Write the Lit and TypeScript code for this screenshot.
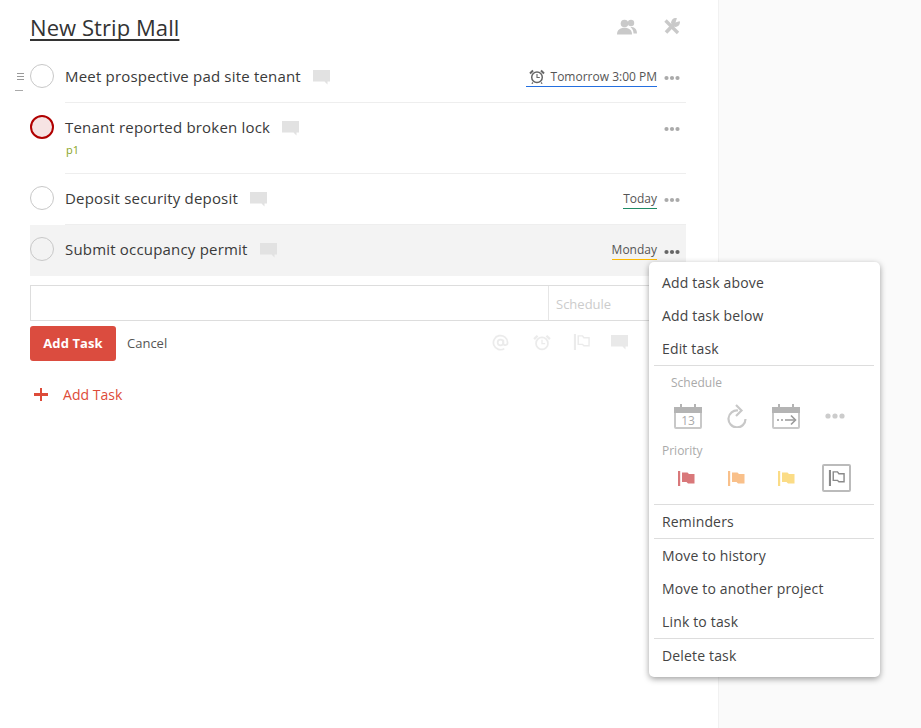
import { LitElement, html, css, nothing } from "lit";
import { customElement } from "lit/decorators.js";

const comment = html`<svg class="cmt" width="17" height="15" viewBox="0 0 17 15"><path d="M0 0h17v11.500h-2.500v3l-3-3H0z" fill="#e2e2e2"/></svg>`;
const dots = html`<svg class="dots" width="16" height="6" viewBox="0 0 16 6"><circle cx="2.500" cy="3" r="2.100"/><circle cx="8" cy="3" r="2.100"/><circle cx="13.500" cy="3" r="2.100"/></svg>`;
const clock = (c: string) => html`<svg width="16" height="15" viewBox="0 0 16 15" fill="none" stroke="${c}"><circle cx="8" cy="8.300" r="5.300" stroke-width="1.500"/><path d="M8 5v3.500h2.800" stroke-width="1.100"/><path d="M1 4.500 4 1.500M15 4.500l-3-3" stroke-width="2"/><path d="M4 13.500l-1.200 1.200M12 13.500l1.200 1.200" stroke-width="1.200"/></svg>`;
const flag = (c: string) => html`<svg width="17" height="15" viewBox="0 0 17 15" fill="${c}"><path d="M0 0h2.200v15H0z"/><path d="M4 1.500h5.500l1.500 1.500h5.500v9.500H10l-1.500-1.500H4z"/></svg>`;
const outlineFlag = (c: string) => html`<svg width="18" height="16" viewBox="0 0 18 17" fill="none" stroke="${c}"><path d="M1.500 0v17" stroke-width="2.200"/><path d="M5 2h4.500l1.500 2h5.500v8.500H11l-1.500-1.500H5z" stroke-width="1.500"/></svg>`;

interface Task { name: string; date?: string; color?: string; alarm?: boolean; label?: string; cls?: string; }

const TASKS: Task[] = [
  { name: "Meet prospective pad site tenant", date: "Tomorrow 3:00 PM", color: "#246fe0", alarm: true },
  { name: "Tenant reported broken lock", label: "p1", cls: "high" },
  { name: "Deposit security deposit", date: "Today", color: "#1f8a65" },
  { name: "Submit occupancy permit", date: "Monday", color: "#fdb900", cls: "active" },
];

@customElement("app-root")
export class AppRoot extends LitElement {
  static styles = css`
    :host { display: block; font-family: "Open Sans", sans-serif; color: #333; }
    * { box-sizing: border-box; }
    .page { position: relative; display: flex; height: 728px; overflow: hidden; background: #fff; }
    .main { width: 719px; flex: none; border-right: 1px solid #f1f1f1; padding: 0 32px 0 30px; }
    .aside { flex: 1; background: #fafafa; }
    .head { display: flex; align-items: center; height: 52px; padding-top: 1px; }
    h1 { margin: 0; flex: 1; font-size: 22px; font-weight: 400; line-height: 30px; color: #333; letter-spacing: .07px; text-decoration: underline; text-decoration-thickness: 2px; text-underline-offset: 3px; text-decoration-skip-ink: none; }
    .head svg { display: block; }
    .head-icons { display: flex; align-items: center; gap: 26px; margin-right: 6px; }

    .task { display: flex; width: 656px; }
    .task.active { background: #f3f3f3; }
    .check { flex: none; width: 24px; height: 24px; margin: 12px 11px 0 0; border-radius: 50%; border: 1px solid #c8c8c8; background: #fff; }
    .active .check { background: #f3f3f3; }
    .high .check { border: 2px solid #b00000; background: #f6e3e3; }
    .body { flex: 1; min-width: 0; height: 51px; border-bottom: 1px solid #eee; padding: 12px 6px 0 0; }
    .high .body { height: 71px; }
    .active .body { border-bottom-color: #f3f3f3; }
    .row1 { display: flex; align-items: center; height: 26px; }
    .name { font-size: 15px; line-height: 24px; margin-bottom: 2px; color: #3a3a3a; letter-spacing: .19px; }
    .cmt { margin: 1px 0 0 12px; display: block; }
    .space { flex: 1; }
    .date { display: flex; align-items: center; gap: 6px; font-size: 12px; line-height: 17px; height: 19px; border-bottom: 1px solid; margin-right: 7px; color: #555; }
    .date svg { margin-left: 3px; }
    .dots { display: block; margin: 2px 0 0 0; fill: #aaa; }
    .active .dots { fill: #666; margin-top: 4px; }
    .label { font-size: 11px; line-height: 14px; margin: 2px 0 0 1px; color: #8aa41e; }

    .form { margin-top: 9px; width: 656px; }
    .field { display: flex; height: 36px; border: 1px solid #ddd; width: 640px; }
    .input { width: 518px; border-right: 1px solid #e6e6e6; }
    .sched { padding-left: 7px; font-size: 13px; line-height: 36px; color: #ccc; }
    .actions { display: flex; align-items: center; margin-top: 5px; height: 35px; }
    .btn { width: 86px; height: 35px; border-radius: 3px; background: #db4c3f; color: #fff; font-size: 13px; font-weight: 700; letter-spacing: .1px; line-height: 35px; text-align: center; }
    .cancel { margin: 0 0 2px 11px; font-size: 13px; color: #555; }
    .tools { margin: 0 58px 3px auto; display: flex; align-items: center; opacity: .1; }
    .tools svg { display: block; }
    .t1 { margin-right: 24px; }
    .t2 { margin-right: 22px; }
    .t3 { margin-right: 20px; }
    .add { display: flex; align-items: center; margin-top: 20px; height: 26px; color: #dd4b39; font-size: 14px; letter-spacing: .03px; }
    .plus { position: relative; width: 33px; height: 26px; margin-top: 2px; }
    .plus::before { content: ""; position: absolute; left: 4px; top: 11px; width: 14px; height: 3px; background: #dd4b39; }
    .plus::after { content: ""; position: absolute; left: 10px; top: 6px; width: 2px; height: 13px; background: #dd4b39; }

    .handle { position: absolute; left: 17px; top: 73px; width: 7px; height: 20px; }
    .handle i { display: block; height: 1px; background: #999; margin-bottom: 2px; }
    .handle b { display: block; height: 1px; width: 8px; margin: 10px 0 0 -2px; background: #aaa; }

    .menu { position: absolute; left: 649px; top: 262px; width: 231px; height: 415px; padding: 4px 6px 0 5px; background: #fff; border-radius: 5px; box-shadow: 0 2px 6px rgba(0,0,0,.38); color: #444; }
    .item { height: 33px; padding-left: 8px; font-size: 14px; letter-spacing: .16px; line-height: 34px; color: #444; }
    .sep { height: 1px; background: #ddd; }
    .cap { font-size: 12px; line-height: 16px; color: #aaa; }
    .s-cap { padding: 9px 0 0 17px; height: 25px; }
    .s-row { display: flex; align-items: center; height: 28px; margin-top: 11px; padding-left: 20px; }
    .s-cell { width: 49px; display: flex; }
    .s-cell.more { padding-left: 4px; }
    .p-cap { padding: 13px 0 0 8px; height: 29px; }
    .p-row { display: flex; align-items: center; height: 28px; margin: 5px 0 12px; padding-left: 24px; }
    .p-cell { width: 50px; display: flex; }
    .p-cell.sel { width: 29px; height: 28px; margin-left: -6px; border: 2px solid #bbb; border-radius: 2px; align-items: center; justify-content: center; }
    .s-row svg, .p-row svg { display: block; }
  `;

  private task(t: Task) {
    return html`<div class="task ${t.cls ?? ""}">
      <div class="check"></div>
      <div class="body">
        <div class="row1">
          <span class="name">${t.name}</span>${comment}
          <span class="space"></span>
          ${t.date ? html`<span class="date" style="border-color:${t.color}">${t.alarm ? clock("#666") : nothing}${t.date}</span>` : nothing}
          ${dots}
        </div>
        ${t.label ? html`<div class="label">${t.label}</div>` : nothing}
      </div>
    </div>`;
  }

  render() {
    return html`<div class="page">
      <div class="main">
        <div class="head">
          <h1>New Strip Mall</h1>
          <div class="head-icons">
            <svg width="20" height="16" viewBox="0 0 20 16" fill="#c9c9c9"><circle cx="7.500" cy="4.500" r="3.800"/><path d="M0 15.500c0-4.500 3-6.700 7.500-6.700S15 11 15 15.500z"/><circle cx="14" cy="4" r="3.200"/><path d="M13.500 8c3.800 0 6.500 1.500 6.500 6.500h-3.500c0-2.500-1-4.500-3-6.500z"/></svg>
            <svg width="17" height="17" viewBox="0 0 17 17"><path d="M2.500 2.500 15 15" stroke="#c9c9c9" stroke-width="3.400" fill="none"/><path d="M3 14.500 12 5" stroke="#c9c9c9" stroke-width="3.600" fill="none"/><circle cx="12.500" cy="4.500" r="4.400" fill="#c9c9c9"/><path d="M12.500 4.500 14 0h3v3z" fill="#fff"/></svg>
          </div>
        </div>
        ${TASKS.map((t) => this.task(t))}
        <div class="form">
          <div class="field"><div class="input"></div><div class="sched">Schedule</div></div>
          <div class="actions">
            <div class="btn">Add Task</div>
            <div class="cancel">Cancel</div>
            <div class="tools">
              <svg class="t1" width="17" height="17" viewBox="0 0 18 17" fill="none" stroke="#444" stroke-width="1.800"><circle cx="9" cy="8.500" r="3"/><path d="M12 5.500v4c0 2.500 4.500 2.500 4.500-1A7.500 7.500 0 1 0 13 15"/></svg>
              <svg class="t2" width="18" height="17" viewBox="0 0 16 15" fill="none" stroke="#444"><circle cx="8" cy="8.300" r="5.300" stroke-width="1.500"/><path d="M8 5v3.500h2.800" stroke-width="1.100"/><path d="M1 4.500 4 1.500M15 4.500l-3-3" stroke-width="2"/></svg>
              <span class="t3">${outlineFlag("#444")}</span>
              <svg width="17" height="15" viewBox="0 0 17 15"><path d="M0 0h17v11.500h-2.500v3l-3-3H0z" fill="#333"/></svg>
            </div>
          </div>
        </div>
        <div class="add"><span class="plus"></span>Add Task</div>
      </div>
      <div class="aside"></div>

      <div class="handle"><i></i><i></i><i></i><b></b></div>

      <div class="menu">
        <div class="item">Add task above</div>
        <div class="item">Add task below</div>
        <div class="item">Edit task</div>
        <div class="sep"></div>
        <div class="cap s-cap">Schedule</div>
        <div class="s-row">
          <div class="s-cell"><svg width="28" height="25" viewBox="0 0 28 25" fill="none"><path d="M1 5h26v18a1 1 0 0 1-1 1H2a1 1 0 0 1-1-1z" stroke="#c8c8c8" stroke-width="2"/><path d="M0 3h28v6H0z" fill="#b4b4b4"/><path d="M6 0h2v4H6zM20 0h2v4h-2z" fill="#b4b4b4"/><text x="14" y="20.500" font-size="12" fill="#aaa" text-anchor="middle" font-family="Open Sans">13</text></svg></div>
          <div class="s-cell"><svg width="24" height="24" viewBox="0 0 24 24" fill="none" stroke="#c8c8c8" stroke-width="2.200" style="margin-left:2px"><path d="M13 6.500A8.500 8.500 0 1 0 20.500 15"/><path d="M11 1l5.500 5.500L11 12"/></svg></div>
          <div class="s-cell"><svg width="28" height="25" viewBox="0 0 28 25" fill="none"><path d="M1 5h26v18a1 1 0 0 1-1 1H2a1 1 0 0 1-1-1z" stroke="#c8c8c8" stroke-width="2"/><path d="M0 3h28v6H0z" fill="#b4b4b4"/><path d="M6 0h2v4H6zM20 0h2v4h-2z" fill="#b4b4b4"/><path d="M5 16h2M9 16h2M13 16h10" stroke="#999" stroke-width="1.600"/><path d="M19 11.500l4.500 4.500-4.500 4.500" stroke="#999" stroke-width="1.600"/></svg></div>
          <div class="s-cell more"><svg width="20" height="6" viewBox="0 0 20 6" fill="#ccc"><circle cx="3" cy="3" r="2.600"/><circle cx="10" cy="3" r="2.600"/><circle cx="17" cy="3" r="2.600"/></svg></div>
        </div>
        <div class="cap p-cap">Priority</div>
        <div class="p-row">
          <div class="p-cell">${flag("#d9787a")}</div>
          <div class="p-cell">${flag("#f9c08a")}</div>
          <div class="p-cell">${flag("#fbdc86")}</div>
          <div class="p-cell sel">${outlineFlag("#8a8a8a")}</div>
        </div>
        <div class="sep"></div>
        <div class="item">Reminders</div>
        <div class="sep"></div>
        <div class="item">Move to history</div>
        <div class="item">Move to another project</div>
        <div class="item">Link to task</div>
        <div class="sep"></div>
        <div class="item">Delete task</div>
      </div>
    </div>`;
  }
}
